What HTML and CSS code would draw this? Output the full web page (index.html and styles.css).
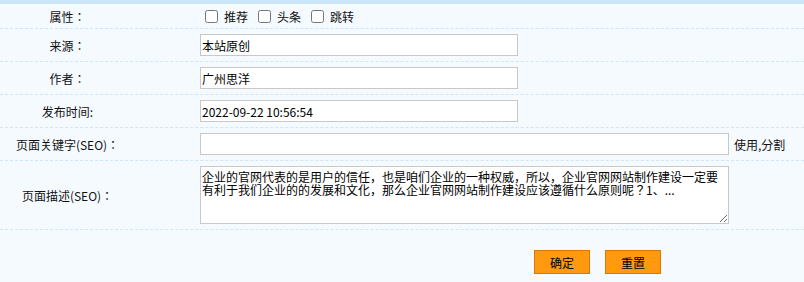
FILE: index.html
```html
<!DOCTYPE html>
<html lang="zh-CN">
<head>
    <meta charset="UTF-8">
    <meta name="viewport" content="width=device-width, initial-scale=1.0">
    <title>编辑文章</title>
    <link rel="stylesheet" href="styles.css">
</head>
<body>
    <form class="edit-form">
        <div class="row row-attr">
            <label class="label">属性：</label>
            <div class="field">
                <label class="check"><input type="checkbox">推荐</label>
                <label class="check"><input type="checkbox">头条</label>
                <label class="check"><input type="checkbox">跳转</label>
            </div>
        </div>
        <div class="row">
            <label class="label">来源：</label>
            <div class="field"><input type="text" class="text" value="本站原创"></div>
        </div>
        <div class="row">
            <label class="label">作者：</label>
            <div class="field"><input type="text" class="text" value="广州思洋"></div>
        </div>
        <div class="row">
            <label class="label">发布时间:</label>
            <div class="field"><input type="text" class="text" value="2022-09-22 10:56:54"></div>
        </div>
        <div class="row">
            <label class="label">页面关键字(SEO)：</label>
            <div class="field">
                <input type="text" class="text wide">
                <span class="hint">使用,分割</span>
            </div>
        </div>
        <div class="row">
            <label class="label">页面描述(SEO)：</label>
            <div class="field">
                <textarea class="desc">企业的官网代表的是用户的信任，也是咱们企业的一种权威，所以，企业官网网站制作建设一定要有利于我们企业的的发展和文化，那么企业官网网站制作建设应该遵循什么原则呢？1、...</textarea>
            </div>
        </div>
        <div class="actions">
            <button type="button" class="btn">确定</button>
            <button type="reset" class="btn">重置</button>
        </div>
    </form>
</body>
</html>
```

FILE: styles.css
```css
html, body {
    margin: 0;
    padding: 0;
}
body {
    background-color: #f5faff;
    border-top: 4px solid #c9e6fc;
    font-family: "Noto Sans CJK JP", "Noto Sans CJK SC", sans-serif;
    font-feature-settings: "locl" 0;
    font-size: 12px;
    color: #111;
    height: 278px;
    overflow: hidden;
}
.row {
    display: grid;
    grid-template-columns: 135px 1fr;
    column-gap: 65px;
    align-items: center;
    padding: 5px 0;
    border-bottom: 1px dashed #cfe6f7;
}
.row-attr {
    padding: 0;
    height: 24px;
}
.label {
    text-align: center;
}
.field {
    display: flex;
    align-items: center;
}
.check {
    display: flex;
    align-items: center;
    margin-right: 10px;
}
.check:first-child {
    margin-left: 5px;
}
.check input {
    margin: 0 6px 0 0;
    width: 13px;
    height: 13px;
}
.text {
    box-sizing: border-box;
    width: 318px;
    height: 22px;
    margin: 0;
    padding: 0 1px;
    border: 1px solid #c8c8c8;
    background-color: #fff;
    font-family: inherit;
    font-feature-settings: inherit;
    font-size: 12px;
    color: #000;
    outline: none;
}
.text.wide {
    width: 529px;
}
.hint {
    margin-left: 5px;
}
.desc {
    box-sizing: border-box;
    width: 529px;
    height: 58px;
    margin: 0;
    padding: 3px 1px 0;
    border: 1px solid #c8c8c8;
    background-color: #fff;
    font-family: inherit;
    font-feature-settings: inherit;
    font-size: 12px;
    line-height: 13px;
    color: #000;
    overflow: hidden;
    outline: none;
}
.actions {
    display: flex;
    gap: 15px;
    padding: 20px 0 0 534px;
}
.btn {
    box-sizing: border-box;
    width: 56px;
    height: 24px;
    margin: 0;
    padding: 0;
    background-color: #ff9a10;
    border: 1px solid #d9780a;
    font-family: inherit;
    font-feature-settings: inherit;
    font-size: 12px;
    color: #000;
    cursor: pointer;
}
```
